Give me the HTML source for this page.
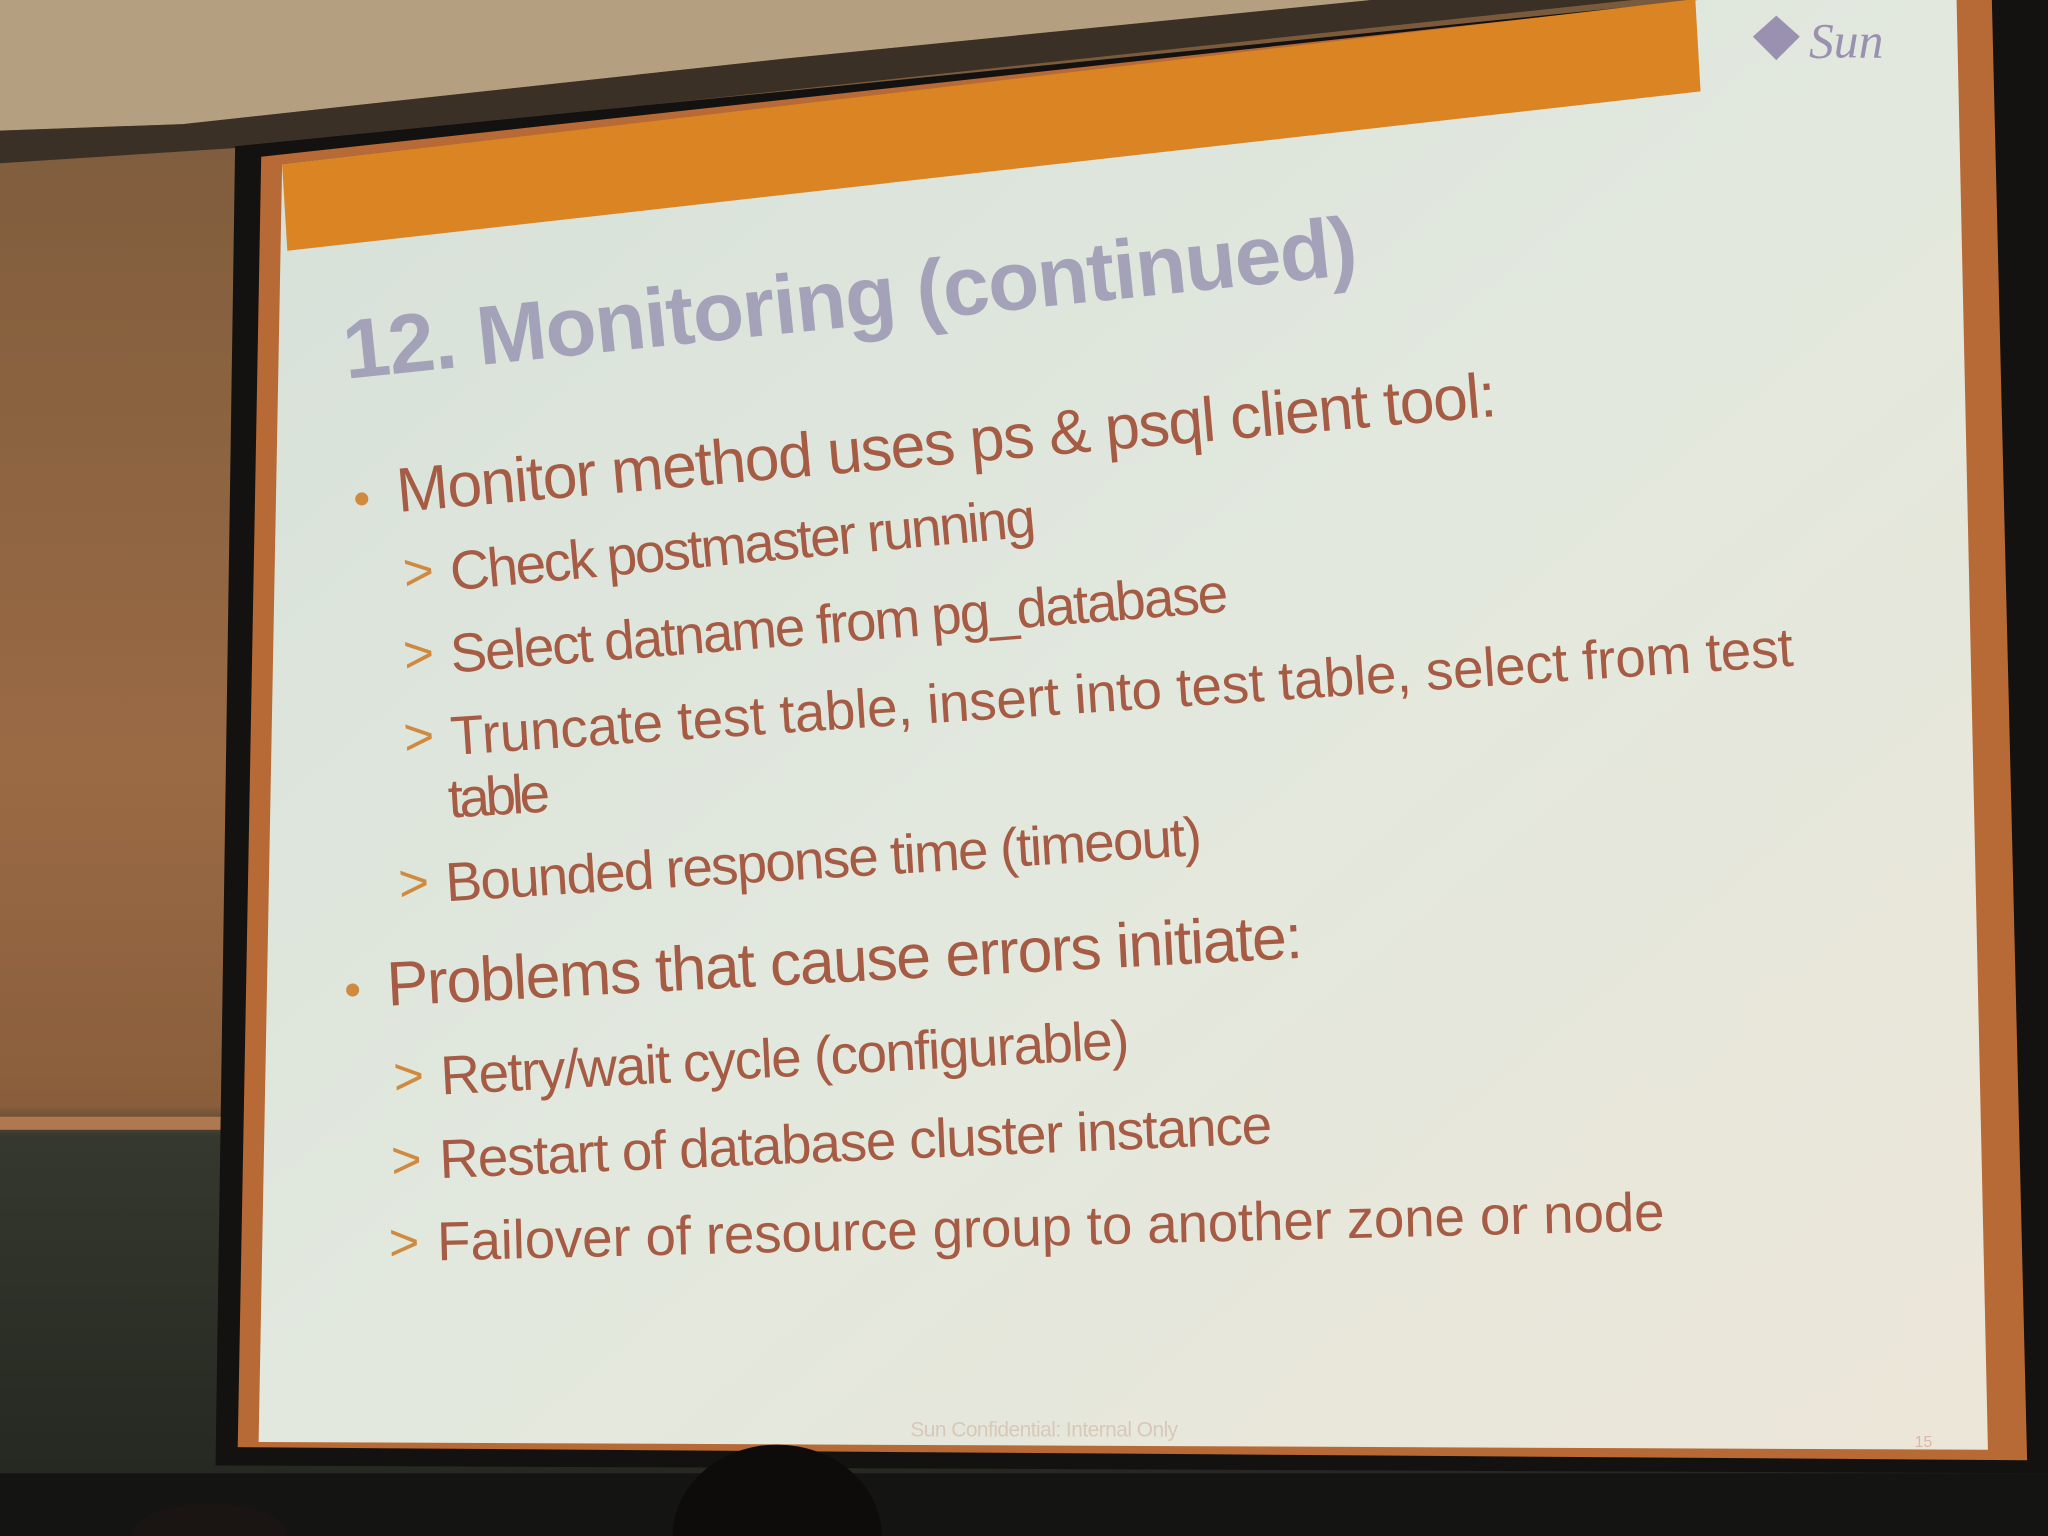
<!DOCTYPE html>
<html><head><meta charset="utf-8"><style>
html,body{margin:0;padding:0;background:#2a2a24;overflow:hidden;width:2048px;height:1536px;}
svg{display:block}
</style></head><body>
<svg width="2048" height="1536" viewBox="0 0 1568 1176" xmlns="http://www.w3.org/2000/svg" font-family="'Liberation Sans', sans-serif">
<defs>
<linearGradient id="wall" x1="0" y1="0" x2="0" y2="1">
<stop offset="0" stop-color="#7a5a3c"/><stop offset="0.5" stop-color="#9a6a44"/><stop offset="0.72" stop-color="#8a5e3c"/><stop offset="0.74" stop-color="#34382e"/><stop offset="1" stop-color="#23261f"/>
</linearGradient>
<linearGradient id="scr" x1="0" y1="0" x2="1" y2="1">
<stop offset="0" stop-color="#d6e0d8"/><stop offset="0.5" stop-color="#e2e8de"/><stop offset="1" stop-color="#ece6d8"/>
</linearGradient>
</defs>
<rect width="1568" height="1176" fill="url(#wall)"/>
<polygon points="0,0 1050,0 600,45 140,95 0,100" fill="#b4a080"/>
<polygon points="0,100 140,95 600,45 1050,0 1250,0 200,112 0,125" fill="#3a3026"/>
<rect x="0" y="855" width="175" height="10" fill="#b07850"/>
<polygon points="180,112 1300,0 1568,0 1568,1128 165,1122" fill="#141210"/>
<polygon points="200,120 1300,0 1525,0 1552,1118 182,1108" fill="#b86a36"/>
<polygon points="216,126 1300,0 1498,0 1522,1110 198,1104" fill="url(#scr)"/>
<polygon points="216,126 1292,0 1298,0 1302,70 220,192" fill="#da8424"/>
<g fill="#9a90b0">
<polygon points="1360,12 1378,28 1360,46 1342,28"/>
<text x="1385" y="44" font-family="'Liberation Serif', serif" font-style="italic" font-size="38">Sun</text>
</g>
<g font-weight="bold" fill="#a4a2b8">
<text x="265" y="290" font-size="64" textLength="780" transform="rotate(-5.9 265 290)">12. Monitoring (continued)</text>
</g>
<g fill="#a65c44">
<circle cx="277" cy="382" r="5" fill="#d08a40"/>
<text x="305" y="392" font-size="48" textLength="845" transform="rotate(-5 305 392)">Monitor method uses ps &amp; psql client tool:</text>
<text x="310" y="452" font-size="40" fill="#d08a40" transform="rotate(-5 310 452)">&gt;</text>
<text x="346" y="452" font-size="42" textLength="450" transform="rotate(-5.3 346 452)">Check postmaster running</text>
<text x="310" y="515" font-size="40" fill="#d08a40" transform="rotate(-4.5 310 515)">&gt;</text>
<text x="346" y="515" font-size="42" textLength="597" transform="rotate(-4.5 346 515)">Select datname from pg_database</text>
<text x="310" y="578" font-size="40" fill="#d08a40" transform="rotate(-3.8 310 578)">&gt;</text>
<text x="346" y="578" font-size="42" textLength="1030" transform="rotate(-3.8 346 578)">Truncate test table, insert into test table, select from test</text>
<text x="344" y="626" font-size="42" textLength="78" transform="rotate(-3.5 344 626)">table</text>
<text x="306" y="690" font-size="40" fill="#d08a40" transform="rotate(-3.5 306 690)">&gt;</text>
<text x="342" y="690" font-size="42" textLength="580" transform="rotate(-3.5 342 690)">Bounded response time (timeout)</text>
<circle cx="270" cy="758" r="5" fill="#d08a40"/>
<text x="297" y="770" font-size="48" textLength="702" transform="rotate(-3 297 770)">Problems that cause errors initiate:</text>
<text x="302" y="838" font-size="40" fill="#d08a40" transform="rotate(-3 302 838)">&gt;</text>
<text x="338" y="838" font-size="42" textLength="528" transform="rotate(-3 338 838)">Retry/wait cycle (configurable)</text>
<text x="300" y="902" font-size="40" fill="#d08a40" transform="rotate(-2.4 300 902)">&gt;</text>
<text x="337" y="902" font-size="42" textLength="638" transform="rotate(-2.4 337 902)">Restart of database cluster instance</text>
<text x="298" y="965" font-size="40" fill="#d08a40" transform="rotate(-1.4 298 965)">&gt;</text>
<text x="335" y="965" font-size="42" textLength="940" transform="rotate(-1.4 335 965)">Failover of resource group to another zone or node</text>
</g>
<text x="697" y="1100" font-size="16" fill="#d8c8b8" textLength="205">Sun Confidential: Internal Only</text>
<text x="1466" y="1108" font-size="12" fill="#d8b8a8">15</text>
<rect x="0" y="1128" width="1568" height="48" fill="#141412"/>
<ellipse cx="595" cy="1176" rx="80" ry="70" fill="#0e0c0a"/>
<ellipse cx="160" cy="1176" rx="60" ry="25" fill="#1a1512"/>
</svg>
</body></html>
